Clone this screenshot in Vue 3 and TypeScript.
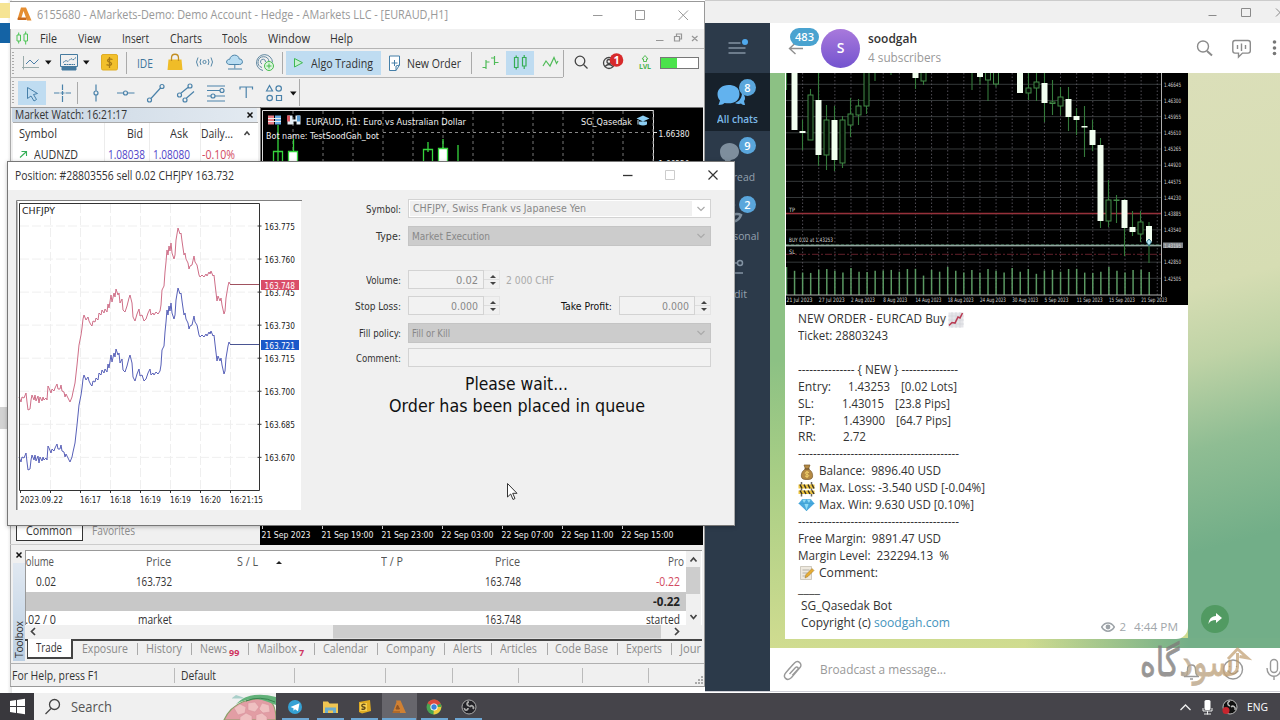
<script setup lang="ts">
import type { DirectiveBinding } from 'vue'

// Condenses or widens a label so that it takes the given width in pixels, in the layout as well.
const vFit = (el: HTMLElement, binding: DirectiveBinding<number>) => {
  el.style.transform = 'none'
  const range = document.createRange()
  range.selectNodeContents(el)
  const natural = range.getBoundingClientRect().width
  if (natural > 0) {
    el.style.transformOrigin = '0 50%'
    el.style.transform = `scaleX(${(binding.value / natural).toFixed(4)})`
    el.style.marginRight = `${(binding.value - natural).toFixed(2)}px`
  }
}

interface Label { text: string; x: number; w: number }

const menus: Label[] = [
  { text: 'File', x: 40, w: 17 }, { text: 'View', x: 78, w: 23 }, { text: 'Insert', x: 122, w: 27 },
  { text: 'Charts', x: 170, w: 32 }, { text: 'Tools', x: 222, w: 25 }, { text: 'Window', x: 268, w: 42 },
  { text: 'Help', x: 330, w: 23 },
]
const menuGap = (i: number) => (i === 0 ? 11 : menus[i].x - menus[i - 1].x - menus[i - 1].w)

const toolTabs: Label[] = [
  { text: 'Exposure', x: 82, w: 46 }, { text: 'History', x: 146, w: 36 }, { text: 'News', x: 200, w: 27 },
  { text: 'Mailbox', x: 257, w: 40 }, { text: 'Calendar', x: 323, w: 45 }, { text: 'Company', x: 386, w: 49 },
  { text: 'Alerts', x: 453, w: 29 }, { text: 'Articles', x: 500, w: 37 }, { text: 'Code Base', x: 555, w: 53 },
  { text: 'Experts', x: 626, w: 36 }, { text: 'Jour', x: 680, w: 21 },
]
const tabSeparators = [137, 191, 248, 314, 377, 444, 491, 547, 617, 671]
const badges: Record<string, string> = { News: '99', Mailbox: '7' }
const badgeWidth = (t: Label) => (badges[t.text] ? (t.text === 'News' ? 13 : 8) : 0)
const tabLead = (i: number) => (i === 0 ? 9 : toolTabs[i].x - tabSeparators[i - 1])
const tabTrail = (i: number) =>
  i < tabSeparators.length ? tabSeparators[i] - toolTabs[i].x - toolTabs[i].w - badgeWidth(toolTabs[i]) : 0

const timeLabels = ['21 Sep 2023', '21 Sep 19:00', '21 Sep 23:00', '22 Sep 03:00', '22 Sep 07:00', '22 Sep 11:00', '22 Sep 15:00']
const gridX = Array.from({ length: 13 }, (_, i) => 293 + i * 30)

const tickPrices = ['163.775', '163.760', '163.745', '163.730', '163.715', '163.700', '163.685', '163.670']
const tickTimes = [
  { t: '2023.09.22', x: 20, w: 43 }, { t: '16:17', x: 80, w: 21 }, { t: '16:18', x: 110, w: 21 },
  { t: '16:19', x: 140, w: 21 }, { t: '16:19', x: 170, w: 21 }, { t: '16:20', x: 200, w: 21 }, { t: '16:21:15', x: 230, w: 33 },
]
const tickLine =
  '19,397 21,402 22,397 24,398 26,393 27,402 28,410 30,409 31,400 32,395 34,400 35,395 36,401 38,396 39,403 40,397 42,401 43,397 44,400 46,398 47,400 48,386 49,388 51,393 52,389 54,391 55,388 57,384 58,389 60,389 61,385 62,391 64,392 65,397 66,394 68,398 70,402 72,397 73,392 75,383 77,365 79,345 81,335 82,328 83,319 84,315 86,320 88,317 89,321 91,325 92,326 93,321 95,322 96,318 98,320 99,313 101,315 102,310 104,313 105,309 107,312 108,304 109,308 111,295 112,302 114,293 115,297 116,289 118,295 119,293 120,303 122,299 123,310 125,312 127,306 129,298 130,295 132,303 133,317 135,321 137,314 139,309 140,316 142,315 144,321 146,319 148,313 150,309 151,315 153,313 154,315 156,312 158,314 160,311 161,305 162,290 164,286 165,272 166,262 167,250 168,255 169,246 170,251 171,243 172,253 174,259 175,255 176,240 178,228 179,231 180,234 181,233 182,241 184,255 185,253 186,259 188,263 189,269 190,266 192,265 194,256 195,262 197,265 199,275 200,277 202,275 204,277 206,274 207,276 209,272 210,274 211,271 213,276 214,275 215,284 217,301 218,296 220,301 221,298 222,305 224,314 225,311 226,298 228,286 229,282 230,284'

type Candle = [number, number, number, number, number, 0 | 1]
// x, wick top, wick bottom, body top, body bottom, filled
const candles: Candle[] = [
  [786.5, 73, 90, 73, 73, 0], [794.5, 73, 130, 73, 130, 1], [802.5, 120, 150, 131, 133, 1], [810.5, 89, 140, 95, 140, 0],
  [818.5, 73, 166, 100, 155, 1], [826.5, 105, 170, 120, 155, 0], [834.5, 106, 171, 120, 160, 1], [842.5, 116, 168, 120, 163, 0],
  [850.5, 98, 137, 114, 125, 0], [858.5, 99, 125, 106, 115, 0], [866.5, 73, 114, 66, 106, 0], [875, 73, 81, 73, 73, 0],
  [891, 73, 75, 73, 73, 0], [915.5, 73, 89, 73, 78, 1], [923.5, 73, 85, 66, 81, 0], [972, 73, 90, 73, 73, 0],
  [980, 73, 85, 73, 77, 1], [988, 73, 101, 66, 80, 0], [996, 73, 87, 66, 84, 0], [1020, 73, 93, 73, 93, 1],
  [1028.5, 73, 100, 88, 93, 0], [1036.5, 73, 101, 82, 88, 0], [1044.5, 73, 122, 83, 103, 1], [1052.5, 80, 115, 102, 103.5, 0],
  [1060.5, 87, 115, 97, 106, 0], [1068.5, 87, 131, 99, 117, 1], [1076.5, 108, 135, 116, 120, 1], [1084.5, 106, 157, 126, 127.5, 1],
  [1092.5, 120, 151, 130, 145, 1], [1100.5, 138, 228, 145, 221, 1], [1108.5, 180, 227, 200, 221, 0], [1116.5, 195, 223, 200, 200.5, 0],
  [1124.5, 199, 256, 200, 228, 1], [1132.5, 211, 236, 227, 232, 1], [1140.5, 211, 242, 222, 234, 0], [1149, 222, 263, 226, 242, 1],
]
const volumes = Array.from({ length: 46 }, (_, i) => ({ x: 786.5 + i * 8.06, top: 269 + ((i * 7) % 5) * 0.9 + (i % 7 === 3 ? 3 : 0) - (i % 4 === 0 ? 2 : 0) }))
const prices = ['1.46645', '1.46300', '1.45955', '1.45610', '1.45265', '1.44920', '1.44575', '1.44230', '1.43885', '1.43540', '1.43195', '1.42850', '1.42505']
const dates = ['21 Jul 2023', '27 Jul 2023', '2 Aug 2023', '8 Aug 2023', '14 Aug 2023', '18 Aug 2023', '24 Aug 2023', '30 Aug 2023', '5 Sep 2023', '11 Sep 2023', '15 Sep 2023', '21 Sep 2023']

interface Line { text: string; w: number; icon?: string; link?: string; vals?: { t: string; w: number; gap: number }[] }
const dashes = '-------------------------------------------'
const lines: Line[] = [
  { text: 'NEW ORDER - EURCAD Buy', w: 148, icon: 'chart' },
  { text: 'Ticket: 28803243', w: 90 },
  { text: '', w: 0 },
  { text: '--------------- { NEW } ---------------', w: 160 },
  { text: 'Entry:', w: 33, vals: [{ t: '1.43253', w: 42, gap: 17 }, { t: '[0.02 Lots]', w: 56, gap: 11 }] },
  { text: 'SL:', w: 16, vals: [{ t: '1.43015', w: 42, gap: 28 }, { t: '[23.8 Pips]', w: 55, gap: 11 }] },
  { text: 'TP:', w: 17, vals: [{ t: '1.43900', w: 42, gap: 28 }, { t: '[64.7 Pips]', w: 55, gap: 11 }] },
  { text: 'RR:', w: 18, vals: [{ t: '2.72', w: 23, gap: 27 }] },
  { text: dashes, w: 161 },
  { text: 'Balance:  9896.40 USD', w: 122, icon: 'bag' },
  { text: 'Max. Loss: -3.540 USD [-0.04%]', w: 166, icon: 'barrier' },
  { text: 'Max. Win: 9.630 USD [0.10%]', w: 155, icon: 'gem' },
  { text: dashes, w: 161 },
  { text: 'Free Margin:  9891.47 USD', w: 143 },
  { text: 'Margin Level:  232294.13  %', w: 151 },
  { text: 'Comment:', w: 59, icon: 'memo' },
  { text: '____', w: 22 },
  { text: ' SG_Qasedak Bot', w: 94 },
  { text: ' Copyright (c) ', w: 76, link: 'soodgah.com' },
]

const drawTools = [
  { x: 50, w: 25, d: 'M54 92.5h5.5M65.5 92.5h5.500M62.500 84v5.500M62.500 95.500v6M60.500 92.500h4M62.500 90.500v4' },
  { x: 75, w: 8, d: '', sep: true },
  { x: 83, w: 29, d: 'M98 84v6.500M98 94.500v6.500M96 92.500a2 2 0 1 0 4 0a2 2 0 1 0 -4 0' },
  { x: 112, w: 31, d: 'M119 92.500h6.500M129.500 92.500h7M125.500 92.500a2 2 0 1 0 4 0a2 2 0 1 0 -4 0' },
  { x: 143, w: 30, d: 'M152.500 98.500L162.500 87.500M149.500 99.500a2 2 0 1 0 4 0a2 2 0 1 0 -4 0M162 86a2 2 0 1 0 4 0a2 2 0 1 0 -4 0' },
  { x: 173, w: 31, d: 'M182.500 93L190.500 86.500M188 98L196 91M179.500 94.500a2 2 0 1 0 4 0a2 2 0 1 0 -4 0M190 85.500a2 2 0 1 0 4 0a2 2 0 1 0 -4 0M185 99.500a2 2 0 1 0 4 0a2 2 0 1 0 -4 0' },
  { x: 204, w: 30, d: 'M209 85.500h18M209 90h13M209 95.500h4M217 95.500h10M209 100.500h18M222 90a2 2 0 1 0 4 0a2 2 0 1 0 -4 0M213 95.500a2 2 0 1 0 4 0a2 2 0 1 0 -4 0' },
  { x: 234, w: 30, d: 'M242 89V86.500H254.500V89M248.200 86.500V97.500' },
  { x: 264, w: 23, d: 'M268.500 90.500L271.500 85L274.500 90.500ZM278 88a2.700 2.700 0 1 0 5.400 0a2.700 2.700 0 1 0 -5.400 0M269 97.500a2.700 2.700 0 1 0 5.400 0a2.700 2.700 0 1 0 -5.400 0M278.500 95h5v5h-5Z' },
]

const folders = [
  { name: 'All chats', n: 8, w: 41 },
  { name: 'Unread', n: 9, w: 36 },
  { name: 'Personal', n: 2, w: 42 },
]
</script>

<template>
  <div class="desktop">
    <div class="behind">
      <i class="b-yellow" /><i class="b-blue" /><i class="b-grey" />
    </div>

    <!-- Messenger window -->
    <section class="tg">
      <div class="tg-title">
        <svg width="75" height="22" viewBox="1205 0 75 22" fill="none" stroke="#8a8a8a">
          <path d="M1208.500 14.500h8M1241.500 7.500h9v8h-9zM1276 7.500l8 8M1284 7.500l-8 8" />
        </svg>
      </div>
      <div class="tg-main">
        <aside class="tg-side">
          <div class="burger">
            <svg width="24" height="24" viewBox="725 36 24 24">
              <path d="M728.500 43h12M728.500 48h17M728.500 53h17" stroke="#8393a3" stroke-width="1.400" />
              <circle cx="745" cy="42" r="3" fill="#4fa9ee" />
            </svg>
          </div>
          <div v-for="(f, i) in folders" :key="f.name" class="folder" :class="{ on: i === 0 }">
            <svg width="38" height="32" viewBox="0 0 38 32">
              <g v-if="i === 0" fill="#62b2ee">
                <path d="M12.500 6C6 6 1.500 10 1.500 15c0 3 1 5 2.500 6.500L2.500 26c3 0 5-1 6-2 9 1.500 15-2 15-9S18 6 12.500 6z" />
                <path d="M26 14c0 6-4 9-7 10 3 1.500 5 1 6 .5 1 1 2.500 1.500 4 1.500l-1-4c2-2 1-6-2-8z" />
              </g>
              <path v-else-if="i === 1" fill="#7e8e9d" d="M13.500 6C8 6 4 10 4 14.500S6 22 9 23c0 2-1 3-2 4 3 0 6-1 8-4 5-1 8-4 8-8.500S19 6 13.500 6z" />
              <g v-else fill="none" stroke="#7e8e9d" stroke-width="2.500">
                <circle cx="14" cy="9" r="4" /><path d="M9 23c5 4 13 4 16-4-3-2-7-1-9 1" />
              </g>
            </svg>
            <b class="fbadge">{{ f.n }}</b>
            <span v-fit="f.w">{{ f.name }}</span>
          </div>
          <div class="folder edit">
            <svg width="38" height="32" viewBox="0 0 38 32" fill="none" stroke="#8393a3" stroke-width="1.500">
              <path d="M6 9h15.500M6 19h21" /><circle cx="24" cy="9" r="2.500" />
            </svg>
            <span v-fit="19">Edit</span>
          </div>
        </aside>
        <div class="tg-chat">
          <header class="tg-head">
            <svg class="back" width="20" height="20" viewBox="786 38 20 20" fill="none" stroke="#8f8f8f" stroke-width="1.400"><path d="M803 48.500h-13M795.500 43l-6 5.500l6 5.500" /></svg>
            <b class="count"><span v-fit="19">483</span></b>
            <div class="avatar">S</div>
            <div class="who">
              <strong v-fit="49">soodgah</strong>
              <span v-fit="73">4 subscribers</span>
            </div>
            <svg class="head-icons" width="85" height="34" viewBox="1195 31 85 34" fill="none" stroke="#8b8b8b" stroke-width="1.400">
              <circle cx="1203" cy="46.500" r="5.500" /><path d="M1207 51l5 4.500" stroke-width="2" />
              <path d="M1235 40.500h13q2.300 0 2.300 2.300v8q0 2.300-2.300 2.300h-5.500l-4 4v-4h-3.500q-2.200 0-2.200-2.300v-8q0-2.300 2.200-2.300z" />
              <path d="M1237.500 45v4M1241.500 43.500v7.500M1245.500 45v4" />
              <g fill="#777" stroke="none"><circle cx="1274.500" cy="42" r="1.800" /><circle cx="1274.500" cy="48" r="1.800" /><circle cx="1274.500" cy="53.500" r="1.800" /></g>
            </svg>
          </header>

          <div class="feed">
            <article class="bubble">
              <svg class="shot" width="402" height="232" viewBox="786 73 402 232">
                <rect x="786" y="73" width="402" height="232" fill="#000" />
                <g stroke="#35393a" stroke-width="1">
                  <path v-for="(p, i) in prices" :key="p" :d="`M786 ${84.300 + i * 16.170}H1161`" />
                </g>
                <path v-for="i in 23" :key="i" :d="`M${786.500 + i * 16.120} 73V295`" stroke="#63606a" stroke-width=".8" stroke-dasharray="1.500 2" />
                <path d="M786 213.500H1161" stroke="#96303a" stroke-width="1.600" /><path d="M786 254.300H1161" stroke="#61202a" stroke-dasharray="7 2 2 2" />
                <path d="M786 245.500H1161" stroke="#92a69f" stroke-width="1.300" />
                <path d="M786 244.500H1161" stroke="#477e60" stroke-width=".6" stroke-dasharray="3 2" />
                <path v-for="v in volumes" :key="v.x" :d="`M${v.x} ${v.top}V295`" stroke="#5a9962" stroke-width="1.500" />
                <g v-for="c in candles" :key="c[0]">
                  <path :d="`M${c[0]} ${c[1]}V${c[2]}`" stroke="#347a3b" stroke-width="1.100" />
                  <rect v-if="c[4] > c[3]" :x="c[0] - (c[5] ? 3 : 2.500)" :y="c[3]" :width="c[5] ? 6 : 5" :height="c[4] - c[3]" :fill="c[5] ? '#f2fff0' : '#020b03'" :stroke="c[5] ? 'none' : '#438b48'" />
                </g>
                <path d="M1149 239l2.500 3-2.500 4-2.500-4z" fill="#b6e7f2" stroke="#39798c" />
                <path d="M786 295H1162M1161.500 73V297" stroke="#afafaf" />
                <rect x="1163" y="242.500" width="20" height="5.500" fill="#82878c" />
                <g class="tiny">
                  <text v-for="(p, i) in prices" :key="p" x="1164" :y="86.500 + i * 16.170" textLength="17" lengthAdjust="spacingAndGlyphs">{{ p }}</text>
                  <text v-for="(d, i) in dates" :key="d" :x="786.500 + i * 32.240" y="301.500" :textLength="d.length > 10 ? 26 : 24" lengthAdjust="spacingAndGlyphs">{{ d }}</text>
                  <text x="789" y="212" textLength="6" lengthAdjust="spacingAndGlyphs">TP</text>
                  <text x="789" y="242" textLength="44" lengthAdjust="spacingAndGlyphs">BUY 0.02 at 1.43253</text>
                  <text x="789" y="253.500" textLength="6" lengthAdjust="spacingAndGlyphs">SL</text>
                </g>
              </svg>
              <div class="text">
                <p v-for="(l, i) in lines" :key="i">
                  <svg v-if="l.icon && l.icon !== 'chart'" class="emoji" width="17" height="16" viewBox="0 0 17 16">
                    <g v-if="l.icon === 'bag'">
                      <path d="M6 1h6l-1.500 4C14 7 15 10 14.500 13c-.5 2-2 2.500-5.500 2.500S4 15 3.500 13C3 10 4 7 7.500 5z" fill="#b58a43" stroke="#76572b" stroke-width=".7" />
                      <path d="M6.500 5h5" stroke="#5e4626" /><path d="M11 8.500c-4-1.500-5 1.500-2 2s2 3-2 1.500M9 7v7" stroke="#f3d36c" fill="none" />
                    </g>
                    <g v-else-if="l.icon === 'barrier'">
                      <path d="M3.500 1v14.500M13.500 1v14.500" stroke="#666" stroke-width="1.500" />
                      <path d="M.5 3.500h16v4H.5zM.5 9.500h16v3.500H.5z" fill="#efc53e" />
                      <path d="M2 3.500l2 4M6 3.500l2 4M10 3.500l2 4M14 3.500l2 4M2 9.500l2 3.500M6 9.500l2 3.500M10 9.500l2 3.500M14 9.500l2 3.500" stroke="#38342a" stroke-width="1.500" />
                    </g>
                    <g v-else-if="l.icon === 'gem'">
                      <path d="M4 2.500h9l3.500 4L8.500 14 .5 6.500z" fill="#49a9df" /><path d="M4 2.500L6 6.500 8.500 2.500 11 6.500 13 2.500zM.5 6.500h16M6 6.500l2.500 7.500L11 6.500z" fill="#90dcf7" stroke="#359aca" stroke-width=".4" />
                    </g>
                    <g v-else>
                      <path d="M2.500 1.500h11v13h-11z" fill="#eee9df" stroke="#bdb8aa" stroke-width=".7" /><path d="M4.500 5h7M4.500 8h5M4.500 11h4" stroke="#a5a29b" stroke-width=".8" />
                      <path d="M7 13l1-3.500 6-6 2 2-6 6z" fill="#e6ac31" stroke="#98702a" stroke-width=".5" />
                    </g>
                  </svg>
                  <span v-if="l.text" v-fit="l.w">{{ l.text }}</span>
                  <span v-for="v in l.vals" :key="v.t" v-fit="v.w" :style="{ marginLeft: v.gap + 'px' }">{{ v.t }}</span>
                  <a v-if="l.link" v-fit="76">{{ l.link }}</a>
                  <svg v-if="l.icon === 'chart'" class="emoji last" width="16" height="16" viewBox="0 0 16 16">
                    <path d="M.5.5h15v15H.5z" fill="#e5e5e9" /><path d="M4 0v16M8 0v16M12 0v16M0 4h16M0 8h16M0 12h16" stroke="#cfd0d6" stroke-width=".6" />
                    <path d="M1 13.500l3-3 3 .5 3-6 2 1 2.500-5" stroke="#b93b53" stroke-width="1.600" fill="none" />
                  </svg>
                </p>
              </div>
              <footer class="meta">
                <svg width="14" height="12" viewBox="0 0 14 12"><path d="M.7 6C4 .5 10 .5 13.300 6 10 11.500 4 11.500.7 6z" fill="none" stroke="#9da3a8" stroke-width="1.500" /><circle cx="7" cy="6" r="2.400" fill="#9da3a8" /></svg>
                <span class="views">2</span><span v-fit="44">4:44 PM</span>
              </footer>
            </article>
            <div class="share">
              <svg width="16" height="14" viewBox="0 0 16 14"><path d="M9 1l6 5-6 5V8C5 8 3 9 1.500 12 2 7 4 4.500 9 4z" fill="#fff" /></svg>
            </div>
          </div>

          <div class="composer">
            <svg width="22" height="24" viewBox="782 657 22 24" fill="none" stroke="#999" stroke-width="1.400">
              <path d="M788 669l6.500-7c3.500-3.500 8.500 1 5.500 4.500l-8.500 10c-4.500 4.500-9.500-.5-5.500-5l7-8M789.500 673l6-6.500c1.500-1.500 3.500.5 2.200 2l-5.500 6" />
            </svg>
            <span v-fit="126">Broadcast a message...</span>
            <svg class="comp-icons" width="100" height="40" viewBox="1180 650 100 40" fill="none" stroke="#999" stroke-width="1.400">
              <path d="M1184 676.500h15M1186 676c2-2 1.500-4 1.500-6.500 0-6 8-6 8 0 0 2.500 0 4.500 2 6.500M1190 679h3" />
              <circle cx="1233" cy="669.500" r="9.500" /><path d="M1228 671q5 6 10 0M1229.500 666.500h.1M1236.500 666.500h.1" stroke-linecap="round" />
              <rect x="1270.500" y="659.500" width="7" height="13" rx="3.500" /><path d="M1267 668c0 11 14 11 14 0M1274 676v4" />
            </svg>
          </div>
        </div>
      </div>
    </section>

    <!-- Brand mark lying over the messenger -->
    <div class="brand">
      <svg width="116" height="60" viewBox="1136 635 116 60">
        <defs>
          <linearGradient id="brandInk" gradientUnits="userSpaceOnUse" x1="1138" y1="0" x2="1240" y2="0">
            <stop offset=".4" stop-color="#7f7d7b" /><stop offset=".48" stop-color="#b9a78d" /><stop offset="1" stop-color="#c5a171" />
          </linearGradient>
        </defs>
        <text x="1234" y="676" textLength="94" lengthAdjust="spacingAndGlyphs" fill="url(#brandInk)" stroke="url(#brandInk)">سودگاه</text>
        <path d="M1226 675q11 0 11.500-8v-14M1228 659l9.500-10 10 9-8-1.500" fill="none" stroke="#bd9969" stroke-opacity=".85" stroke-width="3" />
      </svg>
    </div>

    <!-- Trading terminal window -->
    <section class="mt">
      <div class="mt-title">
        <svg width="16" height="16" viewBox="0 0 16 16"><path d="M4 .5h5l5.500 13h-4.500L6.500 4 4 12H.5z" fill="#e58e32" /><path d="M1 10.500h8.500v2.500H.5z" fill="#c96a1d" /></svg>
        <span v-fit="411">6155680 - AMarkets-Demo: Demo Account - Hedge - AMarkets LLC - [EURAUD,H1]</span>
        <svg class="push" width="106" height="20" viewBox="590 4 106 20" fill="none" stroke="#999"><path d="M593 14.500h9.500M635.500 9.500h9v9h-9zM678.500 9.500l9.500 9.500M688 9.500l-9.500 9.500" /></svg>
      </div>
      <div class="mt-menu">
        <svg width="14" height="16" viewBox="0 0 14 16" fill="none" stroke="#4cc454"><path d="M1 5h3.500v6H1zM2.700 2.500V5M2.700 11v2.500M8 4h3.500v7H8zM9.700 1.500V4M9.700 11v3.500" /></svg>
        <span v-for="(m, i) in menus" :key="m.text" v-fit="m.w" :style="{ marginLeft: menuGap(i) + 'px' }">{{ m.text }}</span>
        <svg class="push" width="50" height="14" viewBox="653 31 50 14" fill="none" stroke="#969696"><path d="M656 40.500h7.500M674.500 36.500h5v4.500h-5zM676.500 36v-2h5v5h-2M692 36l5.500 5M697.500 36l-5.500 5" stroke-width="1.200" /></svg>
      </div>
      <div class="bar bar1">
        <i class="grip" />
        <svg width="36" height="26" viewBox="20 51 36 26" fill="none" stroke="#4b7fa8">
          <path d="M23.500 57v13.500M22 68.500h17" stroke="#9aa" /><path d="M26 65l4-4 4 4 4.500-4.500" /><path d="M45 61.500h6.500l-3.200 4z" fill="#111" stroke="none" />
        </svg>
        <svg width="40" height="26" viewBox="56 51 40 26" fill="none" stroke="#457a9f">
          <path d="M60.500 55.500h17v12h-17zM62 70.500h14" /><path d="M62 68h14v3h-14z" fill="#457a9f" /><path d="M63 63.500l3-2 2 1 3-3 2 1.500 3-2.500M64 65.500h11" stroke-dasharray="2 .5" /><path d="M83 61.500h6.500l-3.200 4z" fill="#111" stroke="none" />
        </svg>
        <svg width="28" height="26" viewBox="96 51 28 26"><rect x="101.500" y="55.500" width="16" height="15.500" rx="1.500" fill="#f2c02c" stroke="#e0ad25" /><path d="M112.500 60.500c-5-2-6.500 2-3 2.700s2.500 4.500-3 2.500M109.500 58v11" fill="none" stroke="#a77a17" stroke-width="1.300" /></svg>
        <i class="sep" />
        <div class="ide"><span v-fit="16">IDE</span></div>
        <svg width="30" height="26" viewBox="160 51 30 26"><path d="M168.500 60.500h13l1 10.500h-15z" fill="#efbc28" /><path d="M171.500 62v-3c0-5 7-5 7 0v3" fill="none" stroke="#c28e21" stroke-width="1.300" /></svg>
        <svg width="30" height="26" viewBox="190 51 30 26" fill="none" stroke="#5688a8"><path d="M198 58.500q-3 4.500 0 9M201 60q-2 3 0 6M208 60q2 3 0 6M211 58.500q3 4.500 0 9" /><circle cx="204.500" cy="63" r="1.600" /></svg>
        <svg width="30" height="26" viewBox="220 51 30 26" fill="#b9ddf2" stroke="#4b83a8"><path d="M230 65.500c-5 0-4-5.500-.3-5.200 1-5.500 9-5.500 9.500-.3 4-.5 4.500 5.500.5 5.500z" /><path d="M234.800 65.500v4M228 70h14" fill="none" /></svg>
        <svg width="30" height="26" viewBox="250 51 30 26" fill="none" stroke="#6289a2"><path d="M263 71.500a8 8 0 1 1 9.500-8M262 68.500a5.500 5.500 0 1 1 7-6M262 65a2.500 2.500 0 1 1 3.500-2" /><circle cx="269" cy="67" r="4.500" stroke="#46bd4d" fill="#dcf5de" /><path d="M269 64.500v5M266.500 67h5" stroke="#46bd4d" /></svg>
        <i class="sep" />
        <div class="algo"><svg width="12" height="14" viewBox="0 0 12 14"><path d="M1.500 2.500v8.500l8-4.300z" fill="#c9f0d2" stroke="#3db954" /></svg><span v-fit="62">Algo Trading</span></div>
        <div class="neworder"><svg width="14" height="17" viewBox="0 0 14 17" fill="#fff" stroke="#457fa8"><path d="M1.500 1h10v9l-3.500 5.500h-6.500zM8 15.500V11l3.500-1" /><path d="M6.500 5v6M3.500 8h6" /></svg><span v-fit="54">New Order</span></div>
        <i class="sep" />
        <svg width="31" height="26" viewBox="474 51 31 26" fill="none" stroke="#4fbb58" stroke-width="1.200"><path d="M485 61v9M481.500 68.500h3.500M485 63h3.500M493.500 57v9M490 59h3.500M493.500 63.500h4" /></svg>
        <svg class="on" width="28" height="24" viewBox="505 52 28 24" fill="none" stroke="#35ad54" stroke-width="1.200"><path d="M513.500 58.500h3.500v10h-3.500zM515.200 56.500v2M515.200 68.500v2M521.500 58.500h3.500v8.500h-3.500zM523.200 56v2.500M523.200 67v3" /></svg>
        <svg width="29" height="26" viewBox="533 51 29 26" fill="none" stroke="#4fbb58" stroke-width="1.200"><path d="M542 67l3-5 4 5 4-8.500 2.500 6 1.500-2.500" /></svg>
        <i class="sep edge" />
        <svg width="133" height="26" viewBox="569 51 133 26" fill="none" stroke="#444" stroke-width="1.300">
          <circle cx="580" cy="62" r="4.800" /><path d="M583.500 65.500l4 4" />
          <circle cx="609" cy="64" r="5.500" /><circle cx="609" cy="62.500" r="2" /><path d="M605 67.500q4-4 8 0" />
          <circle cx="616.500" cy="61" r="6.800" fill="#d72a2b" stroke="none" /><text x="613.500" y="65" class="wt">1</text>
          <path d="M645 56.500l3 3.500h-1.500v2.500h-3V60H642z" stroke="#56bd57" stroke-width="1" /><text x="639" y="70" class="lvl" textLength="12">LVL</text>
          <rect x="660.500" y="58.500" width="38" height="11" fill="#fff" stroke="#777" stroke-width="1" /><path d="M661 59h16v10h-16z" fill="#4be34c" stroke="none" />
        </svg>
      </div>
      <div class="bar bar2">
        <i class="grip" />
        <svg class="on first" width="28" height="24" viewBox="18 80 28 24" fill="none" stroke="#467fa9"><path d="M27.500 86.500v11l3.500-2.500 3 5 2.500-1.500-3-5 4-1z" /></svg>
        <template v-for="t in drawTools" :key="t.x">
          <i v-if="t.sep" class="sep" />
          <svg v-else :width="t.x === 50 ? 29 : t.w" height="26" :viewBox="`${t.x === 50 ? 46 : t.x} 79.500 ${t.x === 50 ? 29 : t.w} 26`" fill="none" stroke="#4a82aa" stroke-width="1.200"><path :d="t.d" /></svg>
        </template>
        <svg width="14" height="26" viewBox="285 79.500 14 26"><path d="M290 91h6.500l-3.200 4z" fill="#111" /></svg>
        <i class="sep edge" />
      </div>

      <div class="mt-top">
        <div class="watch">
          <div class="panel-title"><span v-fit="112">Market Watch: 16:21:17</span><svg width="8" height="8" viewBox="0 0 8 8"><path d="M1.500 1.500l5 5M6.500 1.500l-5 5" stroke="#111" stroke-width="1.500" /></svg></div>
          <div class="watch-grid">
            <div class="wr wh"><div class="sy"><span v-fit="38">Symbol</span></div><span v-fit="16">Bid</span><span v-fit="18">Ask</span><span v-fit="32">Daily...</span><svg width="15" height="12" viewBox="0 0 15 12"><path d="M4.500 7l2.500-3 2.500 3" fill="none" stroke="#444" stroke-width="1.500" /></svg></div>
            <div class="wr"><div class="sy"><svg width="15" height="9" viewBox="0 0 15 9"><path d="M1 7.500l6-5.500M2.500 1.500H7.500V6" fill="none" stroke="#36af58" stroke-width="1.100" /></svg><span v-fit="44">AUDNZD</span></div><span v-fit="37" class="q">1.08038</span><span v-fit="37" class="q">1.08080</span><span v-fit="33" class="neg">-0.10%</span></div>
          </div>
        </div>
        <svg class="chart" width="443" height="55" viewBox="260 107 443 55">
          <rect x="260" y="107" width="443" height="55" fill="#000" />
          <path d="M260.500 162v-54.500H703" stroke="#777" fill="none" />
          <path d="M262.500 162V110.500H653.500V162" stroke="#ddd" fill="none" />
          <path v-for="x in gridX" :key="x" :d="`M${x} 111V162`" stroke="#777" stroke-dasharray="3 3" />
          <path d="M383 132.500H653" stroke="#888" stroke-dasharray="3 3" />
          <path d="M653 132.500h4M653 162h4" stroke="#ddd" />
          <g stroke="#35d63c" stroke-width="1.300" fill="#000"><path d="M278 125v36M293.500 139v20M428 142v10M443 139v10M458 145v17M273.500 151.500h9v12h-9zM423.500 149.500h9v13h-9z" /><path d="M288.500 151.500h9v12h-9zM438.500 148.500h9v14h-9z" fill="#fff" /></g>
          <path d="M268 115.500h6v9h-6z" fill="#e77c86" /><path d="M275 115.500h6v9h-6z" fill="#6bace4" /><path d="M268 118.500h13M268 121.500h13" stroke="#eee" />
          <path d="M287.500 115.500h5v4h3v-4h5v9h-4v-3h-3v3h-6z" fill="#e4eef5" /><path d="M287 115.500h3v6h-3z" fill="#dc5862" /><path d="M297 115.500h3v6h-3z" fill="#5d9fd4" />
          <g class="ct">
            <text x="306" y="124.500" textLength="160" lengthAdjust="spacingAndGlyphs">EURAUD, H1:  Euro vs Australian Dollar</text>
            <text x="266" y="138.500" textLength="113" lengthAdjust="spacingAndGlyphs">Bot name: TestSoodGah_bot</text>
            <text x="581" y="124.500" textLength="51" lengthAdjust="spacingAndGlyphs">SG_Qasedak</text>
            <text x="658.500" y="136.500" textLength="31" lengthAdjust="spacingAndGlyphs">1.66380</text>
            <text x="658.500" y="166.500" textLength="31" lengthAdjust="spacingAndGlyphs">1.66220</text>
          </g>
          <path d="M643 115.500l6.500 3-6.500 3-6.500-3zM639 121.500v3q4 2 8 0v-3" fill="#8ccdf2" /><path d="M638 120v4.500" stroke="#cdeafc" />
        </svg>
      </div>

      <div class="mt-mid">
        <div class="mid-tabs"><div class="active"><span v-fit="46">Common</span></div><span v-fit="43" class="fav">Favorites</span></div>
        <svg class="chart" width="443" height="20" viewBox="260 525 443 20">
          <rect x="260" y="525" width="443" height="20" fill="#000" />
          <g class="ct">
            <g v-for="(t, i) in timeLabels" :key="t">
              <path :d="`M${262.500 + i * 60} 526v3`" stroke="#ddd" />
              <text :x="261.500 + i * 60" y="538.300" :textLength="i ? 52 : 49" lengthAdjust="spacingAndGlyphs">{{ t }}</text>
            </g>
          </g>
        </svg>
      </div>

      <div class="toolbox">
        <div class="tb-strip"><svg width="8" height="8" viewBox="0 0 8 8"><path d="M1.500 1.500l5 5M6.500 1.500l-5 5" stroke="#111" stroke-width="1.500" /></svg><div class="tb-grad">Toolbox</div></div>
        <div class="tb-body">
          <div class="tb-view">
            <div class="tb-rows">
              <div class="tr head"><span v-fit="34">Volume</span><span v-fit="25">Price</span><span v-fit="21">S / L</span><i class="sorted" /><span v-fit="22">T / P</span><span v-fit="25">Price</span><span v-fit="16">Pro</span></div>
              <div class="tr"><span v-fit="20">0.02</span><span v-fit="36">163.732</span><span /><i /><span /><span v-fit="36">163.748</span><span v-fit="24" class="loss">-0.22</span></div>
              <div class="tr total"><span /><span /><span /><i /><span /><span /><b v-fit="27">-0.22</b></div>
              <div class="tr cut"><span v-fit="37">0.02 / 0</span><span v-fit="34">market</span><span /><i /><span /><span v-fit="36">163.748</span><span v-fit="34">started</span></div>
            </div>
            <div class="vbar"><svg width="15" height="74" viewBox="0 0 15 74"><path d="M0 16h14v27H0z" fill="#cdcdcd" /><path d="M4.500 10.500l3-3.500 3 3.500M4.500 64l3 3.500 3-3.500" fill="none" stroke="#444" stroke-width="1.700" /></svg></div>
          </div>
          <div class="hbar"><svg width="677" height="14" viewBox="25 625 677 14"><path d="M333 625h328v13.500H333z" fill="#cdcdcd" /><path d="M35 628l-3.500 3.500 3.500 3.500M675 628l3.500 3.500-3.500 3.500" fill="none" stroke="#444" stroke-width="1.700" /></svg></div>
          <div class="tb-tabs">
            <div class="trade"><span v-fit="26">Trade</span></div>
            <template v-for="(t, i) in toolTabs" :key="t.text">
              <span v-fit="t.w" class="tab" :style="{ marginLeft: tabLead(i) + 'px' }">{{ t.text }}</span>
              <b v-if="badges[t.text]" class="nb" :style="{ width: badgeWidth(t) + 'px' }">{{ badges[t.text] }}</b>
              <i v-if="i < tabSeparators.length" class="tsep" :style="{ marginLeft: tabTrail(i) + 'px' }" />
            </template>
          </div>
        </div>
      </div>

      <div class="status"><div class="help"><span v-fit="87">For Help, press F1</span></div><div class="def"><span v-fit="35">Default</span></div><i /><i /><i /><i /><i /><i />
        <svg width="10" height="10" viewBox="0 0 10 10" fill="#aaa"><path d="M7 1h2v2H7zM7 4h2v2H7zM7 7h2v2H7zM4 4h2v2H4zM4 7h2v2H4zM1 7h2v2H1z" /></svg>
      </div>
    </section>

    <!-- Order dialog -->
    <section class="dlg">
      <div class="dlg-title"><span v-fit="219">Position: #28803556 sell 0.02 CHFJPY 163.732</span>
        <svg width="100" height="18" viewBox="620 166 100 18" fill="none" stroke="#333"><path d="M623 175.500h9.500" stroke-width="1.300" /><path d="M665.500 170.500h9v9h-9z" stroke="#ccc" /><path d="M708.500 170.500l9 9M717.500 170.500l-9 9" stroke-width="1.200" /></svg>
      </div>
      <div class="dlg-body">
        <svg class="ticks" width="286" height="311" viewBox="16 200 286 311">
          <rect x="16" y="200" width="285" height="310" fill="#fff" />
          <path d="M16.500 510V200.500H302" fill="none" stroke="#808080" /><path d="M17.500 510V201.500" fill="none" stroke="#bbb" />
          <g stroke="#efefef" stroke-dasharray="9 3">
            <path v-for="i in 7" :key="i" :d="`M${20.500 + i * 30} 204V489`" />
            <path v-for="(p, i) in tickPrices" :key="p" :d="`M20 ${226 + i * 33.050}H258`" />
          </g>
          <polyline :points="tickLine" fill="none" stroke="#cf6f88" stroke-width="1" />
          <polyline :points="tickLine" transform="translate(0 60)" fill="none" stroke="#5760b8" stroke-width="1" />
          <path d="M230 284.500h29" stroke="#a0525f" /><path d="M230 344.500h29" stroke="#4a5592" />
          <path d="M19.500 490.500V203.500H259.500V490.500Z" fill="none" stroke="#333" />
          <path v-for="i in 8" :key="i" :d="`M${20.500 + (i - 1) * 30} 490v3`" stroke="#333" />
          <path v-for="(p, i) in tickPrices" :key="p" :d="`M257.500 ${226 + i * 33.050}h4`" stroke="#333" />
          <g class="tt">
            <text x="22" y="213.500" textLength="33" lengthAdjust="spacingAndGlyphs">CHFJPY</text>
            <text v-for="(p, i) in tickPrices" :key="p" x="264.500" :y="229.700 + i * 33.050" textLength="30.500" lengthAdjust="spacingAndGlyphs">{{ p }}</text>
            <text v-for="(t, i) in tickTimes" :key="i" :x="t.x" y="502.500" :textLength="t.w" lengthAdjust="spacingAndGlyphs">{{ t.t }}</text>
          </g>
          <path d="M261 280h38v10h-38z" fill="#da4e69" /><path d="M261 340h38v10h-38z" fill="#1b59c9" />
          <g class="tt inv"><text x="264.500" y="288.500" textLength="30.500" lengthAdjust="spacingAndGlyphs">163.748</text><text x="264.500" y="348.500" textLength="30.500" lengthAdjust="spacingAndGlyphs">163.721</text></g>
        </svg>
        <div class="form">
          <div class="fr r1"><label><span v-fit="35">Symbol:</span></label><div class="fld combo"><div class="inner"><span v-fit="173">CHFJPY, Swiss Frank vs Japanese Yen</span></div><svg width="10" height="8" viewBox="0 0 10 8"><path d="M1.500 2l3.500 3.500L8.500 2" fill="none" stroke="#aaa" stroke-width="1.200" /></svg></div></div>
          <div class="fr r2"><label><span v-fit="25">Type:</span></label><div class="fld grey"><span v-fit="78">Market Execution</span><svg width="10" height="8" viewBox="0 0 10 8"><path d="M1.500 2l3.500 3.500L8.500 2" fill="none" stroke="#aaa" stroke-width="1.200" /></svg></div></div>
          <div class="fr r3"><label><span v-fit="35">Volume:</span></label><div class="fld num"><span v-fit="22">0.02</span></div><i class="spin" /><span v-fit="48" class="unit">2 000 CHF</span></div>
          <div class="fr r4"><label><span v-fit="46">Stop Loss:</span></label><div class="fld num"><span v-fit="27">0.000</span></div><i class="spin" /><label class="tp"><span v-fit="51">Take Profit:</span></label><div class="fld num"><span v-fit="27">0.000</span></div><i class="spin" /></div>
          <div class="fr r5"><label><span v-fit="42">Fill policy:</span></label><div class="fld grey"><span v-fit="38">Fill or Kill</span><svg width="10" height="8" viewBox="0 0 10 8"><path d="M1.500 2l3.500 3.500L8.500 2" fill="none" stroke="#aaa" stroke-width="1.200" /></svg></div></div>
          <div class="fr r6"><label><span v-fit="45">Comment:</span></label><div class="fld" /></div>
          <div class="wait"><div><span v-fit="103">Please wait...</span></div><div><span v-fit="256">Order has been placed in queue</span></div></div>
        </div>
      </div>
    </section>

    <svg class="cursor" width="13" height="20" viewBox="0 0 13 20"><path d="M1.500 1.500v13.500l3.200-3 2.300 5.500 2-1-2.300-5.200h4.300z" fill="#fff" stroke="#333" /></svg>

    <footer class="taskbar">
      <div class="start"><svg width="17" height="17" viewBox="0 0 17 17" fill="#fff"><path d="M1 3l6-1v6H1zM8 2l8-1.300V8H8zM1 9h6v6l-6-1zM8 9h8v7.300L8 15z" /></svg></div>
      <div class="search">
        <svg width="18" height="18" viewBox="0 0 18 18" fill="none" stroke="#444" stroke-width="1.300"><circle cx="10.500" cy="6.500" r="5" /><path d="M7 10.500L1.500 16" /></svg>
        <span v-fit="41">Search</span>
        <svg class="fruit" width="56" height="27" viewBox="220 693 56 27">
          <path d="M232 698l4-3 6 2 3 1.500h-13z" fill="#a9cfc9" />
          <path d="M224 720c8-18 28-24 44-20 5 2 8 8 8 20z" fill="#e29da4" stroke="#8a9f68" stroke-width="1.200" />
          <path d="M234 708l6-4 6 3-1 6-7 2zM248 703l7-1 4 5-4 5-7-2zM262 703l7 2 1 7-7 1-4-4zM240 717l6-4 6 3v5h-12zM256 715l6-2 5 4v4h-11z" fill="#efc0c1" stroke="#d58f9a" stroke-width=".5" />
          <path d="M236 704q14-14 40-7v8q-10-4-14-5-12-3-26 4z" fill="#62b179" /><path d="M246 701q14-6 29 1" stroke="#37834f" fill="none" />
        </svg>
      </div>
      <div class="apps">
        <span class="app"><svg width="16" height="16" viewBox="0 0 16 16"><circle cx="8" cy="8" r="7" fill="#35a2d5" /><path d="M3.500 8l9-3.700-1.500 8-3-2-1.500 1.500V9.300z" fill="#fff" /></svg></span>
        <span class="app"><svg width="17" height="16" viewBox="0 0 17 16"><path d="M1 2.500h5l1.500 2H16v9.500H1z" fill="#efc552" /><path d="M3 8.500h11V14h-3v-2.500H6V14H3z" fill="#6cadce" /></svg></span>
        <span class="app"><svg width="16" height="16" viewBox="0 0 16 16"><path d="M2 3l11-2 1 11-9 2.500-3-1.500z" fill="#dfab21" /><path d="M3 4h7v8H3z" fill="#f5ce4f" /><path d="M8.500 5.500C4 4 4 8 6.500 8s2 3-2 2" fill="none" stroke="#5c4719" stroke-width="1.300" /></svg></span>
        <span class="app cur"><svg width="16" height="16" viewBox="0 0 16 16"><path d="M5 1.500h4.500L15 14H1.500L5.500 3z" fill="#cf8032" /><path d="M6.500 6l2 4h-3.500zM1.500 13H9" fill="#915423" stroke="#915423" /></svg></span>
        <span class="app"><svg width="16" height="16" viewBox="0 0 16 16"><circle cx="8" cy="8" r="7.500" fill="#4aa552" /><path d="M8 8L1.500 4.200A7.500 7.500 0 0 1 14.500 4.300z" fill="#dc493e" /><path d="M8 8h6.900l.3-2.500c1 5-2.500 10-7.700 10z" fill="#f1c83e" /><path d="M8 4.500h7L14.500 4 8 .5z" fill="#dc493e" /><circle cx="8" cy="8" r="3.600" fill="#fff" /><circle cx="8" cy="8" r="2.700" fill="#3c82dc" /></svg></span>
        <span class="app"><svg width="16" height="16" viewBox="0 0 16 16"><circle cx="8" cy="8" r="7" fill="#232328" stroke="#aaa" /><path d="M8 7C5 6 6 3 8 3M8.500 8c2-3 5 0 3.500 2M7 9c0 3-4 2.500-3.500 0" fill="none" stroke="#aaa" stroke-width="1.800" /></svg></span>
      </div>
      <div class="tray">
        <svg width="70" height="20" viewBox="1177 697 70 20" fill="none" stroke="#eee"><path d="M1180.500 710l5-5 5 5" stroke-width="1.300" /><rect x="1204.500" y="700" width="6" height="10" rx="1.500" fill="#fff" stroke="none" /><path d="M1203 708v3h9v-3M1207.500 711v3.500M1204 714h7" /><circle cx="1230" cy="707" r="7" fill="#111" stroke="#bbb" /><path d="M1230 706c-3-1-3-4 0-5M1231 707c2-2 5 0 4 3" stroke="#bbb" stroke-width="1.500" /><circle cx="1226" cy="710.500" r="3.500" fill="#c8252e" stroke="none" /></svg>
        <span v-fit="21">ENG</span>
      </div>
    </footer>
  </div>
</template>

<style>
html, body { margin: 0; overflow: hidden; background: #fff; }
</style>

<style scoped>
.desktop { position: relative; width: 1280px; height: 720px; overflow: hidden; background: #fff; font-family: "Open Sans", "Noto Sans", sans-serif; font-size: 12px; color: #333; }
.desktop * { box-sizing: border-box; }
span, b, strong, a, text { white-space: pre; }
span { display: inline-block; flex: none; }
svg { display: block; flex: none; }
i { font-style: normal; flex: none; display: block; }

.behind { position: absolute; left: 0; top: 0; width: 12px; height: 693px; background: linear-gradient(90deg, #fff 60%, #e4e4e4); }
.b-yellow { height: 15px; margin-top: 3px; background: #f6e494; }
.b-blue { height: 20px; margin-top: 5px; background: #1463a5; }
.b-grey { height: 22px; margin-top: 364px; background: #d2d2d2; }

/* messenger */
.tg { position: absolute; left: 705px; top: 0; width: 575px; height: 692px; display: flex; flex-direction: column; background: #fff; border-bottom: 1px solid #cfcfd6; }
.tg-title { height: 23px; background: #f0f0f0; border-top: 1px solid #ccc; display: flex; justify-content: flex-end; }
.tg-main { flex: 1; display: flex; min-height: 0; }
.tg-side { width: 65px; background: #2c3a4a; color: #94a1ae; font-size: 11px; }
.burger { height: 50px; padding: 13px 0 0 20px; }
.folder { position: relative; height: 58.3px; display: flex; flex-direction: column; align-items: center; padding-top: 6px; line-height: 15px; }
.folder svg { margin-right: 5px; }
.folder.on { background: #17212b; color: #7bb9e8; font-weight: 600; }
.fbadge { position: absolute; left: 34px; top: 6px; width: 17px; height: 17px; border-radius: 9px; background: #5aa6dc; color: #fff; font-size: 11px; line-height: 17px; text-align: center; font-weight: 600; }
.tg-chat { flex: 1; display: flex; flex-direction: column; min-width: 0; }
.tg-head { position: relative; height: 50px; display: flex; align-items: center; background: #fff; }
.back { margin-left: 16px; }
.count { position: absolute; left: 20px; top: 5px; width: 29px; height: 18px; border-radius: 9px; background: #4aa3d0; color: #fff; font-size: 11px; line-height: 18px; font-weight: 600; text-align: center; z-index: 1; }
.avatar { width: 39px; height: 39px; margin-left: 15px; border-radius: 50%; background: linear-gradient(#a879dc, #7454cf); color: #fff; font-weight: 600; font-size: 14px; line-height: 38px; text-align: center; }
.who { display: flex; flex-direction: column; align-items: flex-start; margin-left: 8px; line-height: 19px; flex: 1; }
.who strong { font-size: 12.5px; font-weight: 600; color: #333; }
.who span { font-size: 12px; color: #999; }
.feed { position: relative; height: 575px; display: flex; background: linear-gradient(90deg, rgba(205, 220, 140, 0) 50%, rgba(116, 175, 136, 1) 82%) 0 100% / 100% 10px no-repeat, linear-gradient(165deg, #dbdfb9 0%, #d6ddb3 36%, #bfd3a6 48%, #8fbd93 63%, #72ae88 80%) 418px 0 / 100px 100% no-repeat, linear-gradient(#8cc184 0%, #8cc184 50%, #a8ce85 70%, #d0dc90 100%); }
.bubble { width: 403px; height: 566px; margin-left: 15px; background: #fff; border-radius: 0 0 12px 0; display: flex; flex-direction: column; }
.shot { margin-left: 1px; }
.tiny text { font: 6px "DejaVu Sans Condensed", "DejaVu Sans", sans-serif; fill: #d5d5d5; }
.text { padding: 6.2px 0 0 13px; font-size: 12px; color: #333; height: 328px; flex: none; }
.text p { margin: 0; height: 16.9px; line-height: 16.9px; display: flex; align-items: center; }
.text a { color: #4594bd; }
.emoji { margin-right: 4px; }
.emoji.last { margin: 0 0 0 2px; }
.meta { display: flex; align-items: center; justify-content: flex-end; height: 16px; margin: -14px 10px 0 0; color: #a2a7ab; font-size: 11.5px; line-height: 16px; }
.views { margin: 0 8px 0 4px; }
.share { width: 28px; height: 28px; margin: 532px 0 0 13px; border-radius: 50%; background: #519a62; display: grid; place-items: center; }
.composer { height: 43px; display: flex; align-items: center; padding-left: 12px; background: #fff; color: #999; font-size: 12.5px; }
.composer > span { margin-left: 16px; }
.comp-icons { margin-left: auto; }
.brand { position: absolute; left: 1136px; top: 635px; opacity: .8; }
.brand text { font: 39px "DejaVu Sans", sans-serif; direction: rtl; stroke-width: .8px; }

/* terminal */
.mt { position: absolute; left: 10px; top: 1px; width: 695px; height: 686px; display: flex; flex-direction: column; background: #f0f0f0; border: solid #999; border-width: 1px 1px 1px 0; box-shadow: inset 1px 0 #aaa; font-size: 12px; }
.mt > * { flex: none; }
.mt-title { height: 27px; background: #fff; display: flex; align-items: center; padding: 0 0 2px 7px; color: #999; }
.mt-title span { margin-left: 4px; }
.push { margin-left: auto; }
.mt-title .push { margin-right: 8px; }
.mt-menu { height: 19px; display: flex; align-items: center; padding: 0 1px 1px 6px; }
.mt-menu svg:first-child { margin-right: -1px; }
.bar { display: flex; align-items: center; height: 29px; border-top: 1px solid #b4b4b4; }
.bar2 { width: 100%; border-top: 1px solid transparent; border-image: linear-gradient(90deg, #b4b4b4 552px, transparent 552px) 1; height: 30px; }
.grip { width: 10px; height: 23px; background: repeating-linear-gradient(#aaa 0 1px, transparent 1px 3px) 2px 0 / 2px 100% no-repeat; }
.sep { width: 6px; height: 22px; background: linear-gradient(#aaa, #aaa) 2px 0 / 1px 100% no-repeat; }
.sep.edge { height: 27px; background-position: 0 0; }
.ide { width: 30px; padding-left: 7px; color: #41779d; }
.algo { width: 95px; height: 24px; background: #bfdcf1; display: flex; align-items: center; padding-left: 7px; }
.algo span { margin-left: 6px; }
.neworder { width: 88px; display: flex; align-items: center; padding-left: 7px; }
.neworder span { margin-left: 5px; }
.on { background: #bfdcf1; }
.first { margin-left: -2px; }
.lvl { font: bold 7px "Open Sans", sans-serif; fill: #4bb44f; stroke: none; }
.wt { font: bold 11px "Open Sans", sans-serif; fill: #fff; stroke: none; }
.mt-top { display: flex; height: 55px; }
.watch { width: 250px; padding-left: 2px; border-top: 1px solid #999; }
.panel-title { height: 14px; width: 245px; display: flex; align-items: center; justify-content: space-between; padding: 0 3px; background: linear-gradient(90deg, #c9d6e3, #e3eaf1); line-height: 14px; }
.watch-grid { width: 245px; margin-left: 1px; background: #fff; border-top: 1px solid #aaa; height: 40px; }
.wr { display: grid; grid-template-columns: 89px 43px 45px 45px 18px; height: 21px; align-items: center; justify-items: end; line-height: 20px; background: linear-gradient(#ececec, #ececec) 91px 0 / 1px 100% no-repeat, linear-gradient(#ececec, #ececec) 136px 0 / 1px 100% no-repeat, linear-gradient(#ececec, #ececec) 187px 0 / 1px 100% no-repeat; }
.wh { grid-template-columns: 87px 43px 45px 45px 22px; }
.sy { justify-self: start; margin-left: 6px; display: flex; align-items: center; }
.q { color: #5145c9; }
.neg, .loss { color: #d24a61; }
.ct text { font: 9.5px "DejaVu Sans Condensed", "DejaVu Sans", sans-serif; fill: #eee; }
.mt-mid { margin-top: 363px; height: 20px; display: flex; }
.mid-tabs { width: 250px; display: flex; align-items: flex-start; border-bottom: 1px solid #ccc; color: #8c8c8c; }
.mid-tabs .active { width: 67px; height: 16px; margin-left: 6px; background: #fff; border: solid #333; border-width: 0 1px 1px 1px; padding-left: 9px; color: #333; line-height: 12px; }
.fav { margin-left: 9px; line-height: 12px; }
.toolbox { display: flex; height: 113px; margin-top: 5px; padding-left: 2px; }
.tb-strip { width: 13px; display: flex; flex-direction: column; align-items: center; padding-top: 1px; }
.tb-grad { width: 12px; height: 98px; margin-top: 4px; background: linear-gradient(#bccfe2, #e0e8f1); writing-mode: vertical-rl; transform: rotate(180deg); line-height: 12px; font-size: 10.5px; letter-spacing: -.4px; padding-top: 3px; }
.tb-body { width: 677px; overflow: hidden; }
.tb-view { display: flex; height: 75px; border: solid #999; border-width: 1px 0 0 1px; background: #fff; }
.tb-rows { width: 660px; overflow: hidden; }
.tr { display: grid; grid-template-columns: 30px 116px 86px 34px 111px 118px 159px; height: 20px; line-height: 20px; justify-items: end; align-items: center; width: 655px; }
.tr.head { height: 21px; line-height: 22px; color: #555; grid-template-columns: 28px 117px 87px 34px 111px 117px 164px; }
.tr.total { width: 660px; height: 19px; background: #c8c8c8; color: #222; }
.tr.cut { height: 13px; overflow: hidden; align-items: start; line-height: 18px; }
.sorted { border: 3px solid transparent; border-top: 0; border-bottom: 3px solid #222; margin-right: 10px; }
.vbar { background: #f0f0f0; }
.hbar { height: 14px; background: #f0f0f0; }
.tb-tabs { display: flex; align-items: center; height: 20px; border-top: 2px solid #444; color: #8b8b8b; line-height: 16px; padding-bottom: 2px; }
.trade { flex: none; height: 20px; width: 46px; margin: 0 0 0 2px; background: #fff; border: solid #444; border-width: 0 2px 2px 1px; padding-left: 8px; color: #333; line-height: 18px; }
.nb { color: #cf335e; font-size: 9px; padding: 8px 0 0 2px; flex: none; }
.tsep { width: 1px; margin-right: -1px; height: 12px; background: #aaa; }
.status { height: 23px; border-top: 1px solid #b0b0b0; display: flex; align-items: center; padding: 1px 0 0 2px; line-height: 22px; }
.status .help { width: 162px; }
.status .def { width: 120px; padding-left: 6px; border-left: 1px solid #bbb; height: 15px; line-height: 15px; }
.status i { height: 15px; border-left: 1px solid #bbb; width: 66px; }
.status i:nth-of-type(1) { width: 91px; }
.status i:nth-of-type(2), .status i:nth-of-type(3) { width: 66.5px; }
.status i:nth-of-type(4) { width: 64px; }
.status i:last-of-type { width: 1px; }
.status svg { margin-left: auto; margin-top: 8px; }

/* dialog */
.dlg { position: absolute; left: 7px; top: 161px; width: 728px; height: 365px; background: #f0f0f0; border: 1px solid #777; border-right-color: #aaa; box-shadow: 0 1px 4px rgba(0, 0, 0, .25); font-family: "DejaVu Sans Condensed", "DejaVu Sans", sans-serif; font-size: 10.5px; }
.dlg-title { height: 28px; background: #fff; display: flex; align-items: center; justify-content: space-between; padding: 0 14px 2px 7px; font-family: "Open Sans", sans-serif; font-size: 12px; }
.dlg-body { display: flex; padding: 10px 0 0 8px; }
.tt text { font: 9.5px "DejaVu Sans Condensed", "DejaVu Sans", sans-serif; fill: #222; }
.tt.inv text { fill: #fff; }
.form { width: 409px; margin-top: -1px; }
.fr { display: flex; align-items: center; }
.fr label { width: 99px; text-align: right; margin-right: 7px; line-height: 14px; }
.fld { flex: 1; height: 19px; border: 1px solid #d3d3d3; background: #f2f2f2; display: flex; align-items: center; justify-content: space-between; color: #888; }
.combo { background: #fff; padding-right: 4px; }
.inner { background: #f0f0f0; width: 282px; height: 15px; padding-left: 3px; line-height: 14px; margin-left: 1px; }
.grey { height: 20px; background: #ccc; border-color: #c4c4c4; padding: 0 4px 0 3px; }
.fr .num { flex: none; width: 76px; justify-content: flex-end; padding-right: 5px; }
.r2 { margin-top: 8px; }
.r3 { margin-top: 24px; }
.r4 { margin-top: 7px; }
.r5 { margin-top: 8px; }
.r6 { margin-top: 5px; }
.spin { width: 16px; height: 19px; border: 1px solid #e4e4e4; border-left: 0; position: relative; background: linear-gradient(#ddd, #ddd) 0 50% / 100% 1px no-repeat; }
.spin::before, .spin::after { content: ""; position: absolute; left: 5.500px; border: 3px solid transparent; }
.spin::before { top: 3.500px; border-top: 0; border-bottom-color: #444; }
.spin::after { bottom: 3.500px; border-bottom: 0; border-top-color: #444; }
.unit { margin-left: 6px; color: #aaa; }
.fr .tp { width: 112px; margin-right: 7px; color: #111; }
.wait { margin: 6px 0 0 20px; text-align: center; font-size: 17.5px; line-height: 22px; color: #111; width: 390px; }
.cursor { position: absolute; left: 506px; top: 482px; }

/* taskbar */
.taskbar { position: absolute; left: 0; top: 693px; width: 1280px; height: 27px; background: #45444a; display: flex; align-items: stretch; }
.start { width: 34px; background: #39383d; display: grid; place-items: center; }
.search { width: 242px; background: #f0f0f0; display: flex; align-items: center; padding-left: 10px; font-size: 14px; color: #555; }
.search span { margin-left: 9px; }
.fruit { margin-left: auto; }
.apps { display: flex; margin-left: 2px; }
.app { width: 34.700px; display: grid; place-items: center; background: linear-gradient(#6ca6d3, #6ca6d3) 50% 100% / 27px 2px no-repeat; }
.app.cur { background-color: #67666c; background-size: 34px 2px; }
.tray { margin-left: auto; display: flex; align-items: center; color: #fff; font-size: 11.5px; margin-right: 12px; }
</style>
